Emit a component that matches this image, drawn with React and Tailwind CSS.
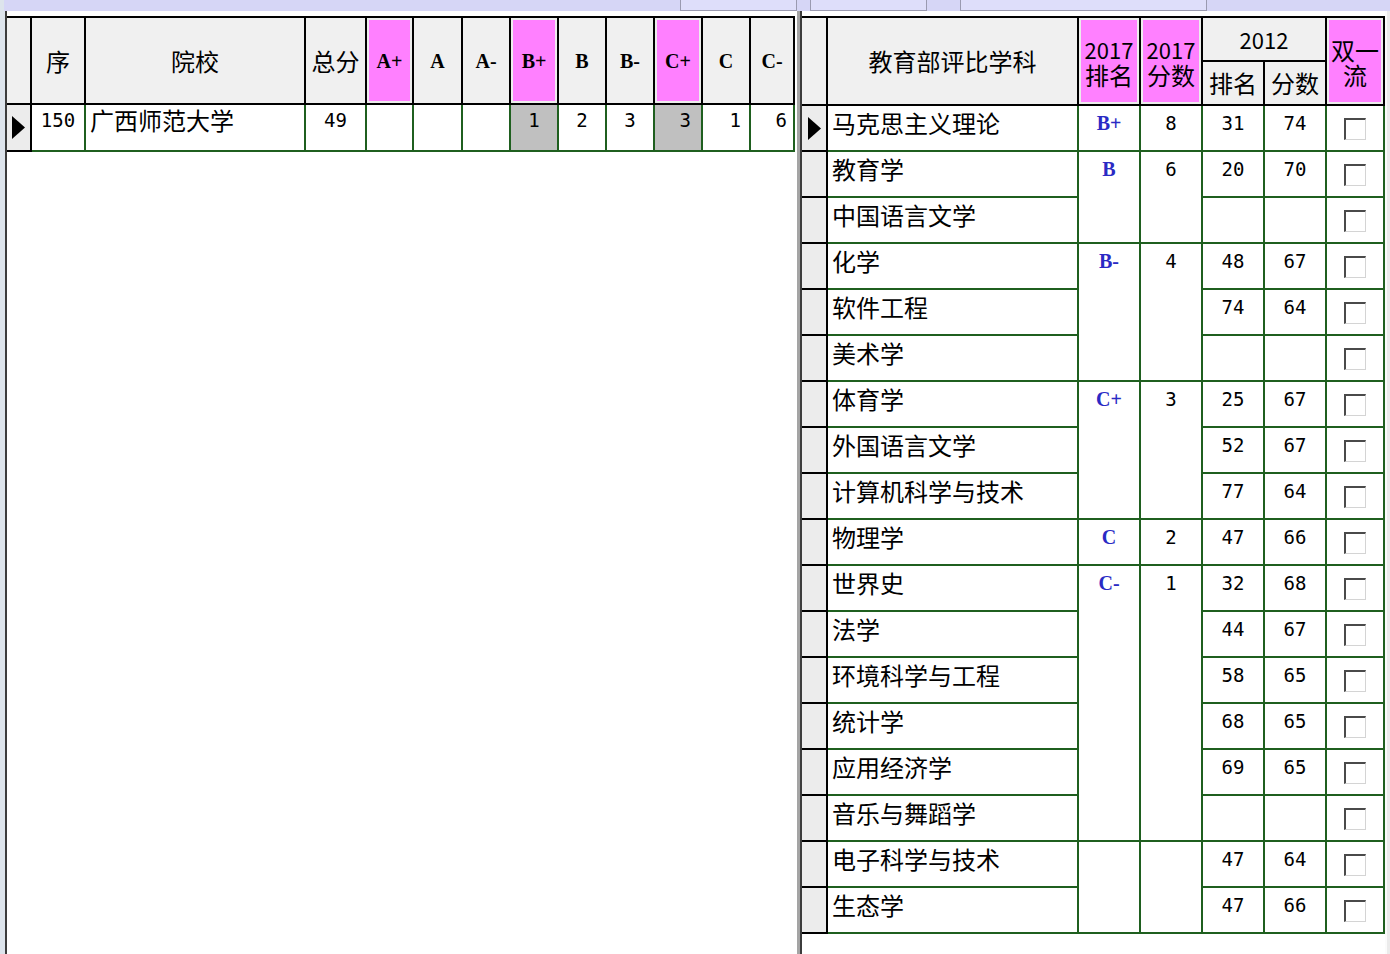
const cjk = "font-['Noto_Sans_CJK_SC',sans-serif]"
const num = "font-['DejaVu_Sans_Mono',monospace]"
const gradeFont = "font-['Liberation_Serif',serif] font-bold"

// header cells: black grid lines
const hd = 'border-r-2 border-b-2 border-black bg-[#f0f0f0] flex items-center justify-center'
const pink = 'border-r-2 border-b-2 border-black bg-[#ff80ff] shadow-[inset_0_0_0_2px_#ececec] flex items-center justify-center'
// body cells: dark green grid lines
const td = 'border-r-2 border-b-2 border-[#1f5f1f] bg-white'
const ind = 'border-r-2 border-b-2 border-black bg-[#ececec] flex items-center justify-center'

const subjects = [
  { name: '马克思主义理论', rank: '31', score: '74' },
  { name: '教育学', rank: '20', score: '70' },
  { name: '中国语言文学', rank: '', score: '' },
  { name: '化学', rank: '48', score: '67' },
  { name: '软件工程', rank: '74', score: '64' },
  { name: '美术学', rank: '', score: '' },
  { name: '体育学', rank: '25', score: '67' },
  { name: '外国语言文学', rank: '52', score: '67' },
  { name: '计算机科学与技术', rank: '77', score: '64' },
  { name: '物理学', rank: '47', score: '66' },
  { name: '世界史', rank: '32', score: '68' },
  { name: '法学', rank: '44', score: '67' },
  { name: '环境科学与工程', rank: '58', score: '65' },
  { name: '统计学', rank: '68', score: '65' },
  { name: '应用经济学', rank: '69', score: '65' },
  { name: '音乐与舞蹈学', rank: '', score: '' },
  { name: '电子科学与技术', rank: '47', score: '64' },
  { name: '生态学', rank: '47', score: '66' },
]

// 2017 grade groups, keyed by the row they start on
const groups = {
  0: { grade: 'B+', score: '8', span: 'row-span-1' },
  1: { grade: 'B', score: '6', span: 'row-span-2' },
  3: { grade: 'B-', score: '4', span: 'row-span-3' },
  6: { grade: 'C+', score: '3', span: 'row-span-3' },
  9: { grade: 'C', score: '2', span: 'row-span-1' },
  10: { grade: 'C-', score: '1', span: 'row-span-6' },
  16: { grade: '', score: '', span: 'row-span-2' },
}

function Arrow() {
  return (
    <svg width="13" height="23" viewBox="0 0 13 23">
      <polygon points="0,0 13,11.5 0,23" fill="#000" />
    </svg>
  )
}

function Check() {
  return (
    <div className="w-[22px] h-[22px] mt-[12px] mx-auto bg-white border-t-2 border-l-2 border-r border-b border-t-[#4a4a4a] border-l-[#4a4a4a] border-r-[#d4d4d4] border-b-[#d4d4d4]" />
  )
}

function Stack({ top, bottom, topClass }) {
  return (
    <div className="flex flex-col items-center">
      <div className={`${topClass} h-[25px] leading-[25px] overflow-visible`}>{top}</div>
      <div className="text-[24px] h-[25px] leading-[25px]">{bottom}</div>
    </div>
  )
}

function LeftTable() {
  const grades = ['A+', 'A', 'A-', 'B+', 'B', 'B-', 'C+', 'C', 'C-']
  const cell = `${td} flex items-start pt-[1px] leading-[28px]`
  return (
    <div className="w-[788px] border-t-2 border-black grid grid-cols-[25px_54px_220px_61px_47px_49px_48px_48px_48px_48px_48px_48px_44px] grid-rows-[87px_47px]">
      {/* header */}
      <div className={hd} />
      <div className={`${hd} ${cjk} text-[24px]`}>序</div>
      <div className={`${hd} ${cjk} text-[24px]`}>院校</div>
      <div className={`${hd} ${cjk} text-[24px]`}>总分</div>
      {grades.map((g) => (
        <div key={g} className={`${g.endsWith('+') ? pink : hd} ${gradeFont} text-[20px]`}>{g}</div>
      ))}

      {/* row */}
      <div className={ind}><Arrow /></div>
      <div className={`${cell} justify-center ${num} text-[19px]`}>150</div>
      <div className={`${cell} pl-[4px] ${cjk} text-[24px]`}>广西师范大学</div>
      <div className={`${cell} justify-center ${num} text-[19px]`}>49</div>
      <div className={cell} />
      <div className={cell} />
      <div className={cell} />
      <div className={`${cell} !bg-[#c0c0c0] justify-center ${num} text-[19px]`}>1</div>
      <div className={`${cell} justify-center ${num} text-[19px]`}>2</div>
      <div className={`${cell} justify-center ${num} text-[19px]`}>3</div>
      <div className={`${cell} !bg-[#c0c0c0] justify-end pr-[10px] ${num} text-[19px]`}>3</div>
      <div className={`${cell} justify-end pr-[8px] ${num} text-[19px]`}>1</div>
      <div className={`${cell} justify-end pr-[6px] ${num} text-[19px]`}>6</div>
    </div>
  )
}

function RightTable() {
  const cell = `${td} flex items-start justify-center pt-[3px] leading-[28px]`
  return (
    <div className="w-[583px] border-t-2 border-black grid grid-cols-[26px_251px_62px_62px_62px_62px_58px] grid-rows-[44px_44px_repeat(18,46px)]">
      {/* header */}
      <div className={`${hd} row-span-2`} />
      <div className={`${hd} row-span-2 ${cjk} text-[24px]`}>教育部评比学科</div>
      <div className={`${pink} row-span-2 pt-[2px] ${cjk}`}>
        <Stack top="2017" bottom="排名" topClass="text-[22px]" />
      </div>
      <div className={`${pink} row-span-2 pt-[2px] ${cjk}`}>
        <Stack top="2017" bottom="分数" topClass="text-[22px]" />
      </div>
      <div className={`${hd} col-span-2 ${cjk} text-[22px]`}>2012</div>
      <div className={`${pink} row-span-2 pt-[2px] ${cjk}`}>
        <Stack top="双一" bottom="流" topClass="text-[24px]" />
      </div>
      <div className={`${hd} ${cjk} text-[24px]`}>排名</div>
      <div className={`${hd} ${cjk} text-[24px]`}>分数</div>

      {/* rows */}
      {subjects.map((s, i) => {
        const g = groups[i]
        return [
          <div key={`i${i}`} className={ind}>{i === 0 && <Arrow />}</div>,
          <div key={`n${i}`} className={`${cell} !justify-start pl-[4px] ${cjk} text-[24px]`}>{s.name}</div>,
          g && (
            <div key={`g${i}`} className={`${cell} ${g.span} ${gradeFont} text-[20px] text-[#2a2ac4]`}>{g.grade}</div>
          ),
          g && (
            <div key={`s${i}`} className={`${cell} ${g.span} ${num} text-[19px]`}>{g.score}</div>
          ),
          <div key={`r${i}`} className={`${cell} ${num} text-[19px]`}>{s.rank}</div>,
          <div key={`c${i}`} className={`${cell} ${num} text-[19px]`}>{s.score}</div>,
          <div key={`x${i}`} className={td}><Check /></div>,
        ]
      })}
    </div>
  )
}

export default function App() {
  return (
    <div className="w-[1390px] h-[954px] overflow-hidden bg-white flex flex-col text-black">
      {/* top toolbar strip, mostly cut off */}
      <div className="h-[11px] bg-[#d6d6f6] flex shrink-0">
        <div className="w-[4px] bg-[#dde4ec]" />
        <div className="ml-[676px] w-[117px] bg-[#dedefa] border-l border-r border-b border-[#9a9ab0]" />
        <div className="ml-[13px] w-[117px] bg-[#dedefa] border-l border-r border-b border-[#9a9ab0]" />
        <div className="ml-[33px] w-[247px] bg-[#dedefa] border-l border-r border-b border-[#9a9ab0]" />
      </div>

      <div className="flex-1 flex">
        <div className="w-[5px] bg-[#dde4ec]" />
        <div className="w-[792px] border-l-2 border-[#3c3c3c] pt-[5px] bg-white">
          <LeftTable />
        </div>
        <div className="w-[3px] bg-[#a4a4a4]" />
        <div className="w-[585px] border-l-2 border-[#3c3c3c] pt-[5px] bg-white">
          <RightTable />
        </div>
        <div className="flex-1 bg-[#ebebeb] border-l-2 border-[#fbfbfb]" />
      </div>
    </div>
  )
}
